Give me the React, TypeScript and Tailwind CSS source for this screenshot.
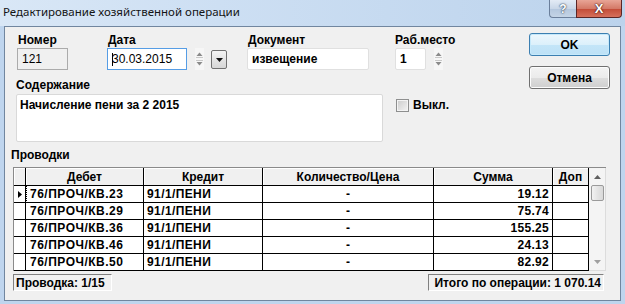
import React from "react";

const rows = [
  { debet: "76/ПРОЧ/КВ.23", kredit: "91/1/ПЕНИ", sum: "19.12" },
  { debet: "76/ПРОЧ/КВ.29", kredit: "91/1/ПЕНИ", sum: "75.74" },
  { debet: "76/ПРОЧ/КВ.36", kredit: "91/1/ПЕНИ", sum: "155.25" },
  { debet: "76/ПРОЧ/КВ.46", kredit: "91/1/ПЕНИ", sum: "24.13" },
  { debet: "76/ПРОЧ/КВ.50", kredit: "91/1/ПЕНИ", sum: "82.92" },
];

const Spin = () => (
  <div className="flex h-[22px] w-[9px] flex-col items-center justify-between bg-[#f6f6f6] py-[4px]">
    <svg width="7" height="6" viewBox="0 0 7 6">
      <path d="M3.5 0.5L6.5 4H0.5z" fill="#8a8a8a" />
      <path d="M0 5.5H7" stroke="#c8c8c8" strokeWidth="1" />
    </svg>
    <svg width="7" height="6" viewBox="0 0 7 6">
      <path d="M0 0.5H7" stroke="#c8c8c8" strokeWidth="1" />
      <path d="M0.5 2L6.5 2L3.5 5.5z" fill="#8a8a8a" />
    </svg>
  </div>
);

const Label = ({ children, className = "" }: { children: React.ReactNode; className?: string }) => (
  <div className={`h-[14px] font-bold leading-[14px] ${className}`}>{children}</div>
);

const headCls = "flex h-[18px] items-center justify-center border-r border-b border-black bg-[#f0f0f0] font-bold shadow-[inset_1px_1px_0_#ffffff]";
const cellCls = "h-[17px] border-r border-b border-black bg-white font-bold leading-[16px] whitespace-nowrap overflow-hidden";

export default function App() {
  return (
    <div className="flex h-[304px] w-[625px] flex-col overflow-hidden bg-[#bfd5ee] font-['Liberation_Sans',Arial,sans-serif] text-[12px] text-black">
      {/* title bar */}
      <div className="flex h-[26px] shrink-0 items-start justify-between bg-[linear-gradient(90deg,#d9e7f6_0%,#cddff3_35%,#bcd3ec_100%)]">
        <div className="pl-[3px] pt-[4px] font-['Noto_Sans',sans-serif] text-[11.5px] leading-[16px] text-[#141414]">
          Редактирование хозяйственной операции
        </div>
        <div className="mr-[3px] flex h-[18px]">
          <div className="flex w-[27px] items-center justify-center rounded-bl-[4px] border border-t-0 border-r-0 border-[#6b7f9b] bg-[linear-gradient(#e3ebf5,#c9d7e8_50%,#b3c6dd_51%,#c4d4e6)] font-bold text-[12px] text-white [text-shadow:0_0_2px_#2d3e55,0_0_1px_#2d3e55]">
            ?
          </div>
          <div className="flex w-[46px] items-center justify-center rounded-br-[4px] border border-t-0 border-[#5b2626] bg-[linear-gradient(#e8a596,#d47a68_50%,#c24a36_51%,#d6705c)] font-bold text-[13px] text-white [text-shadow:0_0_2px_#3a1010,0_0_1px_#3a1010]">
            X
          </div>
        </div>
      </div>

      {/* client area */}
      <div className="mb-[3px] ml-[4px] mr-[4px] flex flex-1 flex-col border border-[#71869f] bg-[#f0f0f0]">
        <div className="flex items-start">
          <div className="flex-1">
            {/* row 1 */}
            <div className="flex items-start pl-[12px] pt-[6px]">
              <div className="flex w-[51px] flex-col">
                <Label className="pl-[1px]">Номер</Label>
                <div className="mt-[1px] flex h-[22px] items-center border border-[#ababab] bg-[#f0f0f0] pl-[4px]">121</div>
              </div>
              <div className="ml-[39px] flex flex-col">
                <Label className="pl-[1px]">Дата</Label>
                <div className="mt-[1px] flex items-start">
                  <div className="flex h-[22px] w-[80px] items-center border border-[#569de5] bg-white pl-[4px]">
                    <span className="mr-[-1px] h-[13px] w-[1px] bg-black" />
                    30.03.2015
                  </div>
                  <div className="ml-[8px]">
                    <Spin />
                  </div>
                  <div className="ml-[7px] mt-[2px] flex h-[19px] w-[16px] items-center justify-center rounded-[2px] border border-[#707070] bg-[linear-gradient(#f4f4f4,#e4e4e4_50%,#d6d6d6)]">
                    <svg width="7" height="4" viewBox="0 0 7 4">
                      <path d="M0 0H7L3.5 4z" fill="#111" />
                    </svg>
                  </div>
                </div>
              </div>
              <div className="ml-[20px] flex flex-col">
                <Label className="pl-[1px]">Документ</Label>
                <div className="mt-[1px] flex h-[22px] w-[122px] items-center rounded-[2px] border border-[#e0e0e0] bg-white pl-[4px] font-bold">
                  извещение
                </div>
              </div>
              <div className="ml-[26px] flex flex-col">
                <Label>Раб.место</Label>
                <div className="mt-[1px] flex items-start">
                  <div className="flex h-[22px] w-[31px] items-center rounded-[2px] border border-[#e0e0e0] bg-white pl-[4px] font-bold">
                    1
                  </div>
                  <div className="ml-[8px]">
                    <Spin />
                  </div>
                </div>
              </div>
            </div>

            {/* row 2 */}
            <Label className="ml-[11px] mt-[8px]">Содержание</Label>
            <div className="flex items-start">
              <div className="ml-[11px] mt-[2px] h-[48px] w-[367px] rounded-[2px] border border-[#d9d9d9] bg-white pl-[3px] pt-[3px] font-bold leading-[14px]">
                Начисление пени за 2 2015
              </div>
              <div className="ml-[13px] mt-[6px] flex items-center gap-[4px]">
                <div className="h-[13px] w-[13px] border border-[#8e8f8f] bg-[linear-gradient(135deg,#cbcbcb,#f4f4f4)] shadow-[inset_0_0_0_1px_#f4f4f4]" />
                <span className="font-bold leading-[14px]">Выкл.</span>
              </div>
            </div>
          </div>

          {/* buttons */}
          <div className="mr-[10px] flex w-[81px] flex-col gap-[10px] pt-[6px]">
            <div className="flex h-[23px] items-center justify-center rounded-[3px] border border-[#3c7fb1] bg-[linear-gradient(#edf7fd,#dcf0fb_50%,#c4e5f8_51%,#bde1f6)] font-bold shadow-[inset_0_0_0_1px_#c6e9fb]">
              OK
            </div>
            <div className="flex h-[23px] items-center justify-center rounded-[3px] border border-[#707070] bg-[linear-gradient(#f3f3f3,#ebebeb_50%,#dddddd_51%,#cfcfcf)] font-bold shadow-[inset_0_0_0_1px_#fcfcfc]">
              Отмена
            </div>
          </div>
        </div>

        {/* postings */}
        <Label className="ml-[6px] mt-[6px]">Проводки</Label>
        <div className="ml-[8px] mt-[5px] flex w-[593px] border-l border-t border-[#8a8a8a]">
          <div className="flex flex-col">
            <div className="flex">
              <div className={`${headCls} w-[12px]`} />
              <div className={`${headCls} w-[118px]`}>Дебет</div>
              <div className={`${headCls} w-[119px]`}>Кредит</div>
              <div className={`${headCls} w-[171px]`}>Количество/Цена</div>
              <div className={`${headCls} w-[119px]`}>Сумма</div>
              <div className={`${headCls} w-[36px]`}>Доп</div>
            </div>
            {rows.map((r, i) => (
              <div key={i} className="relative flex">
                <div className={`${cellCls} flex w-[12px] items-center justify-center bg-[#f0f0f0]`}>
                  {i === 0 && (
                    <svg width="4" height="7" viewBox="0 0 4 7">
                      <path d="M0 0L4 3.5L0 7z" fill="#000" />
                    </svg>
                  )}
                </div>
                <div className={`${cellCls} w-[118px] pl-[4px] tracking-[0.5px]`}>{r.debet}</div>
                <div className={`${cellCls} w-[119px] pl-[3px] tracking-[0.4px]`}>{r.kredit}</div>
                <div className={`${cellCls} w-[171px] text-center`}>-</div>
                <div className={`${cellCls} w-[119px] pr-[3px] text-right tracking-[0.3px]`}>{r.sum}</div>
                <div className={`${cellCls} w-[36px]`} />
                {i === 0 && (
                  <div className="pointer-events-none absolute bottom-[0px] left-[12px] right-0 top-[-1px] border border-dotted border-black" />
                )}
              </div>
            ))}
          </div>
          {/* scrollbar */}
          <div className="flex w-[17px] flex-col items-center border-b border-r border-[#dcdcdc] bg-[#f4f4f4]">
            <div className="flex h-[17px] w-full items-center justify-center">
              <svg width="7" height="4" viewBox="0 0 7 4">
                <path d="M3.5 0L7 4H0z" fill="#606060" />
              </svg>
            </div>
            <div className="h-[16px] w-[13px] rounded-[2px] border border-[#9a9a9a] bg-[linear-gradient(90deg,#f2f2f2,#e4e4e4_50%,#d9d9d9)]" />
            <div className="flex-1" />
            <div className="flex h-[17px] w-full items-center justify-center">
              <svg width="7" height="4" viewBox="0 0 7 4">
                <path d="M0 0H7L3.5 4z" fill="#a0a0a0" />
              </svg>
            </div>
          </div>
        </div>

        {/* status */}
        <div className="ml-[8px] mt-[3px] flex w-[593px] justify-between">
          <div className="flex h-[17px] w-[99px] items-center border border-b-white border-l-[#808080] border-r-white border-t-[#808080] pl-[2px] font-bold">
            Проводка: 1/15
          </div>
          <div className="mr-[2px] flex h-[17px] w-[176px] items-center justify-end border border-b-white border-l-[#808080] border-r-white border-t-[#808080] pr-[2px] font-bold">
            Итого по операции: 1 070.14
          </div>
        </div>
      </div>
    </div>
  );
}
